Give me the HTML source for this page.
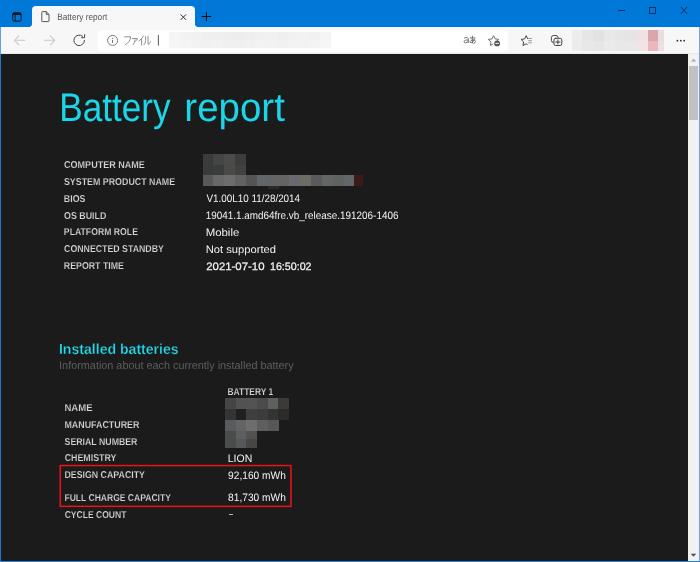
<!DOCTYPE html>
<html><head><meta charset="utf-8"><title>Battery report</title>
<style>
html,body{margin:0;padding:0}
body{width:700px;height:562px;overflow:hidden;position:relative;background:#1b1b1b;font-family:"Liberation Sans",sans-serif}
div{position:absolute}
.t{position:absolute;white-space:pre;line-height:1;transform-origin:0 0;text-rendering:geometricPrecision;font-family:"Liberation Sans",sans-serif}
#titlebar{left:0;top:0;width:700px;height:28px;background:#0078d7}
#tab{left:32px;top:6px;width:163px;height:22px;background:#f7f7f7;border-radius:4px 4px 0 0}
#tabcurveL{left:29px;top:24px;width:3px;height:3px;background:radial-gradient(circle at 0 0,#0078d7 2.6px,#f7f7f7 3.2px)}
#tabcurveR{left:195px;top:24px;width:3px;height:3px;background:radial-gradient(circle at 100% 0,#0078d7 2.6px,#f7f7f7 3.2px)}
#toolbar{left:0;top:27px;width:700px;height:27px;background:#f7f7f7}
#addr{left:98px;top:30px;width:409.5px;height:20.6px;background:#fff;border-radius:3.5px}
#content{left:1px;top:54px;width:687px;height:507px;background:#1b1b1b}
#sbtrack{left:688px;top:54px;width:11px;height:507px;background:#f1f1f1}
#sbthumb{left:689.4px;top:66px;width:8.4px;height:53.7px;background:#c1c1c1}
#tbline{left:1px;top:53px;width:698px;height:1px;background:#e9e9e9}
#bL{left:0;top:27px;width:1px;height:27px;background:#5f9fe4}
#bL2{left:0;top:54px;width:1px;height:508px;background:#1a78d6}
#bR{left:699px;top:27px;width:1px;height:535px;background:#6ea3e3}
#bB{left:0;top:561px;width:700px;height:1px;background:#1f7fd8}
.m{position:absolute}
#txtwrap{left:0;top:0;width:700px;height:562px;filter:blur(0.3px)}
</style></head><body>

<!-- window frame -->
<div id="titlebar"></div>
<div id="tab"></div>
<div id="tabcurveL"></div>
<div id="tabcurveR"></div>
<div id="toolbar"></div>
<div id="addr"></div>
<div id="content"></div>
<div id="sbtrack"></div>
<div id="sbthumb"></div>
<div id="tbline"></div><div id="bL"></div><div id="bL2"></div><div id="bR"></div><div id="bB"></div>

<!-- icons -->
<svg id="icons" width="700" height="562" viewBox="0 0 700 562" style="position:absolute;left:0;top:0" fill="none">
  <!-- tab actions icon -->
  <g stroke="#101010" stroke-width="1">
    <rect x="12.7" y="12.7" width="8.4" height="8.4" rx="1.6"/>
    <path d="M12.7 14 H21.1" stroke-width="1.8"/>
    <path d="M15.1 15 V21.1" stroke-width="0.9"/>
  </g>
  <!-- page icon -->
  <g stroke="#4f4f4f" stroke-width="0.95">
    <path d="M42.4 11.6 H46.2 L49 14.4 V21 Q49 21.6 48.4 21.6 H42.4 Q41.8 21.6 41.8 21 V12.2 Q41.8 11.6 42.4 11.6 Z"/>
    <path d="M46.2 11.8 V14.4 H48.8"/>
  </g>
  <!-- tab close -->
  <path d="M180.6 14.4 L186.1 19.9 M186.1 14.4 L180.6 19.9" stroke="#303030" stroke-width="1"/>
  <!-- new tab plus -->
  <path d="M201.6 16.5 H211.2 M206.4 11.8 V21.1" stroke="#0c0c14" stroke-width="1"/>
  <!-- back / forward -->
  <g stroke="#c9c9c9" stroke-width="1.1" stroke-linecap="round" stroke-linejoin="round">
    <path d="M25 40.3 H14.4 M18.9 35.8 L14.4 40.3 L18.9 44.8"/>
    <path d="M44.2 40.3 H54.8 M50.3 35.8 L54.8 40.3 L50.3 44.8"/>
  </g>
  <!-- reload -->
  <g stroke="#4a4a4a" stroke-width="1" stroke-linecap="round" stroke-linejoin="round">
    <path d="M84.5 40.3 A5.3 5.3 0 1 1 82.5 36.2"/>
    <path d="M84.6 34.6 V37.7 H81.5" />
  </g>
  <!-- info icon -->
  <circle cx="112.6" cy="40.4" r="5" stroke="#6c6c6c" stroke-width="0.9"/>
  <path d="M112.6 39.9 V43" stroke="#6c6c6c" stroke-width="1"/>
  <circle cx="112.6" cy="38.3" r="0.6" fill="#6c6c6c"/>
  <!-- separator -->
  <path d="M158.4 35 V45.6" stroke="#5a5a5a" stroke-width="1"/>
  <!-- window controls -->
  <g stroke="#082a4e" stroke-width="1">
    <path d="M618.2 10.5 H625"/>
    <rect x="649.5" y="7.5" width="6" height="6" stroke="#0a315c"/>
    <path d="M681 7.1 L687.1 13.7 M687.1 7.1 L681 13.7" stroke-width="0.95"/>
  </g>
  <!-- ... menu -->
  <g fill="#2b2b2b"><circle cx="677.4" cy="40.7" r="0.9"/><circle cx="680.8" cy="40.7" r="0.9"/><circle cx="684.2" cy="40.7" r="0.9"/></g>
  <!-- scrollbar arrows -->
  <path d="M690.9 61.5 L693.6 58.7 L696.3 61.5 Z" fill="#a9a9a9"/>
  <path d="M690.7 553.8 L693.5 556.8 L696.3 553.8 Z" fill="#505050"/>
</svg>

<div class="m" style="left:202.65px;top:153.95px;width:10.85px;height:10.75px;background:#3a3c3c"></div>
<div class="m" style="left:213.40px;top:153.95px;width:10.85px;height:10.75px;background:#444547"></div>
<div class="m" style="left:224.15px;top:153.95px;width:10.85px;height:10.75px;background:#4c4b49"></div>
<div class="m" style="left:234.90px;top:153.95px;width:10.85px;height:10.75px;background:#3c3e3e"></div>
<div class="m" style="left:202.65px;top:164.60px;width:10.85px;height:10.75px;background:#3a3a3a"></div>
<div class="m" style="left:213.40px;top:164.60px;width:10.85px;height:10.75px;background:#3a3c3c"></div>
<div class="m" style="left:224.15px;top:164.60px;width:10.85px;height:10.75px;background:#4a4a48"></div>
<div class="m" style="left:234.90px;top:164.60px;width:10.85px;height:10.75px;background:#424242"></div>
<div class="m" style="left:202.65px;top:175.25px;width:10.94px;height:10.80px;background:#56585a"></div>
<div class="m" style="left:213.48px;top:175.25px;width:10.94px;height:10.80px;background:#6a6866"></div>
<div class="m" style="left:224.32px;top:175.25px;width:10.94px;height:10.80px;background:#6c6e6c"></div>
<div class="m" style="left:235.15px;top:175.25px;width:10.94px;height:10.80px;background:#626262"></div>
<div class="m" style="left:245.99px;top:175.25px;width:10.94px;height:10.80px;background:#545454"></div>
<div class="m" style="left:256.82px;top:175.25px;width:10.94px;height:10.80px;background:#62666a"></div>
<div class="m" style="left:267.66px;top:175.25px;width:10.94px;height:10.80px;background:#646464"></div>
<div class="m" style="left:278.49px;top:175.25px;width:10.94px;height:10.80px;background:#646464"></div>
<div class="m" style="left:289.33px;top:175.25px;width:10.94px;height:10.80px;background:#686a70"></div>
<div class="m" style="left:300.17px;top:175.25px;width:10.94px;height:10.80px;background:#6c6c64"></div>
<div class="m" style="left:311.00px;top:175.25px;width:10.94px;height:10.80px;background:#585a5c"></div>
<div class="m" style="left:321.83px;top:175.25px;width:10.94px;height:10.80px;background:#646666"></div>
<div class="m" style="left:332.67px;top:175.25px;width:10.94px;height:10.80px;background:#606262"></div>
<div class="m" style="left:343.50px;top:175.25px;width:10.94px;height:10.80px;background:#626668"></div>
<div class="m" style="left:354.40px;top:175.30px;width:8.60px;height:10.70px;background:#3b1a18"></div>
<div class="m" style="left:268.00px;top:186.00px;width:10.60px;height:3.40px;background:#2a2a2a"></div>
<div class="m" style="left:225.15px;top:397.95px;width:10.75px;height:11.10px;background:#444646"></div>
<div class="m" style="left:235.80px;top:397.95px;width:10.75px;height:11.10px;background:#505254"></div>
<div class="m" style="left:246.45px;top:397.95px;width:10.75px;height:11.10px;background:#535352"></div>
<div class="m" style="left:257.10px;top:397.95px;width:10.75px;height:11.10px;background:#4b4b4a"></div>
<div class="m" style="left:267.75px;top:397.95px;width:10.75px;height:11.10px;background:#5e605f"></div>
<div class="m" style="left:278.40px;top:397.95px;width:10.75px;height:11.10px;background:#3b3a39"></div>
<div class="m" style="left:225.15px;top:408.95px;width:10.75px;height:11.10px;background:#343434"></div>
<div class="m" style="left:235.80px;top:408.95px;width:10.75px;height:11.10px;background:#202020"></div>
<div class="m" style="left:246.45px;top:408.95px;width:10.75px;height:11.10px;background:#3e4040"></div>
<div class="m" style="left:257.10px;top:408.95px;width:10.75px;height:11.10px;background:#3c3c3c"></div>
<div class="m" style="left:267.75px;top:408.95px;width:10.75px;height:11.10px;background:#343434"></div>
<div class="m" style="left:278.40px;top:408.95px;width:10.75px;height:11.10px;background:#2c2b2a"></div>
<div class="m" style="left:225.15px;top:419.95px;width:10.75px;height:11.10px;background:#5a5b5e"></div>
<div class="m" style="left:235.80px;top:419.95px;width:10.75px;height:11.10px;background:#646464"></div>
<div class="m" style="left:246.45px;top:419.95px;width:10.75px;height:11.10px;background:#6e6e6c"></div>
<div class="m" style="left:257.10px;top:419.95px;width:10.75px;height:11.10px;background:#5e5e5e"></div>
<div class="m" style="left:267.75px;top:419.95px;width:10.75px;height:11.10px;background:#575757"></div>
<div class="m" style="left:225.15px;top:430.95px;width:10.75px;height:8.45px;background:#4a4c4c"></div>
<div class="m" style="left:235.80px;top:430.95px;width:10.75px;height:8.45px;background:#5c5e60"></div>
<div class="m" style="left:246.45px;top:430.95px;width:10.75px;height:8.45px;background:#545250"></div>
<div class="m" style="left:225.15px;top:439.30px;width:10.75px;height:8.45px;background:#4c4c4c"></div>
<div class="m" style="left:235.80px;top:439.30px;width:10.75px;height:8.45px;background:#55575a"></div>
<div class="m" style="left:246.45px;top:439.30px;width:10.75px;height:8.45px;background:#474645"></div>
<div class="m" style="left:169.35px;top:32.25px;width:10.85px;height:8.10px;background:#f5f5f5"></div>
<div class="m" style="left:180.10px;top:32.25px;width:10.85px;height:8.10px;background:#f2f2f2"></div>
<div class="m" style="left:190.84px;top:32.25px;width:10.85px;height:8.10px;background:#f1f1f1"></div>
<div class="m" style="left:201.59px;top:32.25px;width:10.85px;height:8.10px;background:#efefef"></div>
<div class="m" style="left:212.34px;top:32.25px;width:10.85px;height:8.10px;background:#efefef"></div>
<div class="m" style="left:223.08px;top:32.25px;width:10.85px;height:8.10px;background:#eeeeee"></div>
<div class="m" style="left:233.83px;top:32.25px;width:10.85px;height:8.10px;background:#ededed"></div>
<div class="m" style="left:244.58px;top:32.25px;width:10.85px;height:8.10px;background:#eeeeee"></div>
<div class="m" style="left:255.32px;top:32.25px;width:10.85px;height:8.10px;background:#f0f0f0"></div>
<div class="m" style="left:266.07px;top:32.25px;width:10.85px;height:8.10px;background:#f1f1f1"></div>
<div class="m" style="left:276.82px;top:32.25px;width:10.85px;height:8.10px;background:#efefef"></div>
<div class="m" style="left:287.56px;top:32.25px;width:10.85px;height:8.10px;background:#f1f1f1"></div>
<div class="m" style="left:298.31px;top:32.25px;width:10.85px;height:8.10px;background:#f2f2f2"></div>
<div class="m" style="left:309.06px;top:32.25px;width:10.85px;height:8.10px;background:#f1f1f1"></div>
<div class="m" style="left:319.80px;top:32.25px;width:10.85px;height:8.10px;background:#f5f5f5"></div>
<div class="m" style="left:169.35px;top:40.25px;width:10.85px;height:8.10px;background:#f6f6f6"></div>
<div class="m" style="left:180.10px;top:40.25px;width:10.85px;height:8.10px;background:#f4f4f4"></div>
<div class="m" style="left:190.84px;top:40.25px;width:10.85px;height:8.10px;background:#f2f2f2"></div>
<div class="m" style="left:201.59px;top:40.25px;width:10.85px;height:8.10px;background:#f1f1f1"></div>
<div class="m" style="left:212.34px;top:40.25px;width:10.85px;height:8.10px;background:#f2f2f2"></div>
<div class="m" style="left:223.08px;top:40.25px;width:10.85px;height:8.10px;background:#f0f0f0"></div>
<div class="m" style="left:233.83px;top:40.25px;width:10.85px;height:8.10px;background:#f0f0f0"></div>
<div class="m" style="left:244.58px;top:40.25px;width:10.85px;height:8.10px;background:#f1f1f1"></div>
<div class="m" style="left:255.32px;top:40.25px;width:10.85px;height:8.10px;background:#f3f3f3"></div>
<div class="m" style="left:266.07px;top:40.25px;width:10.85px;height:8.10px;background:#f2f2f2"></div>
<div class="m" style="left:276.82px;top:40.25px;width:10.85px;height:8.10px;background:#f1f1f1"></div>
<div class="m" style="left:287.56px;top:40.25px;width:10.85px;height:8.10px;background:#f3f3f3"></div>
<div class="m" style="left:298.31px;top:40.25px;width:10.85px;height:8.10px;background:#f3f3f3"></div>
<div class="m" style="left:309.06px;top:40.25px;width:10.85px;height:8.10px;background:#f4f4f4"></div>
<div class="m" style="left:319.80px;top:40.25px;width:10.85px;height:8.10px;background:#f6f6f6"></div>
<div class="m" style="left:572.00px;top:30.00px;width:10.10px;height:10.60px;background:#ededed"></div>
<div class="m" style="left:572.00px;top:40.50px;width:10.10px;height:10.50px;background:#ececec"></div>
<div class="m" style="left:582.00px;top:30.00px;width:11.10px;height:10.60px;background:#e6e6e6"></div>
<div class="m" style="left:582.00px;top:40.50px;width:11.10px;height:10.50px;background:#e8e8e8"></div>
<div class="m" style="left:593.00px;top:30.00px;width:11.10px;height:10.60px;background:#e2e2e2"></div>
<div class="m" style="left:593.00px;top:40.50px;width:11.10px;height:10.50px;background:#e6e6e6"></div>
<div class="m" style="left:604.00px;top:30.00px;width:11.10px;height:10.60px;background:#e8e8e8"></div>
<div class="m" style="left:604.00px;top:40.50px;width:11.10px;height:10.50px;background:#eaeaea"></div>
<div class="m" style="left:615.00px;top:30.00px;width:11.10px;height:10.60px;background:#e6e6e6"></div>
<div class="m" style="left:615.00px;top:40.50px;width:11.10px;height:10.50px;background:#e8e8e8"></div>
<div class="m" style="left:626.00px;top:30.00px;width:11.10px;height:10.60px;background:#e5e5e5"></div>
<div class="m" style="left:626.00px;top:40.50px;width:11.10px;height:10.50px;background:#e8e8e8"></div>
<div class="m" style="left:637.00px;top:30.00px;width:10.60px;height:10.60px;background:#f1e1e4"></div>
<div class="m" style="left:637.00px;top:40.50px;width:10.60px;height:10.50px;background:#f3e3e6"></div>
<div class="m" style="left:647.50px;top:30.00px;width:10.60px;height:10.60px;background:#d9a6ae"></div>
<div class="m" style="left:647.50px;top:40.50px;width:10.60px;height:10.50px;background:#edb6be"></div>
<div class="m" style="left:658.00px;top:30.00px;width:6.10px;height:10.60px;background:#eadcdf"></div>
<div class="m" style="left:658.00px;top:40.50px;width:6.10px;height:10.50px;background:#eee0e2"></div>

<svg width="700" height="562" viewBox="0 0 700 562" style="position:absolute;left:0;top:0" fill="none">
  <rect x="60.25" y="465.55" width="230.7" height="40.8" stroke="#ee1219" stroke-width="1.5"/>
  <!-- kana label -->
  <g stroke="#858585" stroke-width="0.9" stroke-linecap="round" stroke-linejoin="round">
    
    <path d="M124.6 36.8 H130.6 Q130.4 42.2 125.4 44.6"/>
    
    <path d="M132.4 38.6 H137.6 Q137 40.2 135.6 41.2 M135 39.8 Q135.2 43 133 44.8"/>
    
    <path d="M143.6 36 Q141.6 39.4 138.8 41 M141.6 39.2 V45"/>
    
    <path d="M145.6 36.6 V40.4 Q145.6 43.4 144 44.8 M148 36.2 V44.4 Q149.6 43.8 150.6 41.8"/>
  </g>
  <!-- translate icon -->
  <g stroke="#5e5e5e" stroke-width="0.85" stroke-linecap="round" stroke-linejoin="round">
    <path d="M464.5 37.9 Q466 37.2 467.4 37.7 Q468.3 38.2 468.3 39.4 V42.6 M468.3 40 Q464.1 39.8 464.1 41.6 Q464.1 42.8 465.6 42.8 Q467.3 42.8 468.3 41.4"/>
    <path d="M470.2 37.9 H475 M472.4 36.2 Q472 40.2 472.6 43 M474.6 39 Q473.9 41.9 471.2 42.7 Q469.9 42.7 470.1 41.6 Q470.5 40.1 472.9 39.9 Q475.4 39.9 475.6 41.4 Q475.6 42.7 473.9 43.3"/>
  </g>
  <!-- star with minus badge -->
  <g stroke="#666" stroke-width="0.95" stroke-linejoin="round">
    <path d="M493.6 35.6 L495.2 38.9 L498.8 39.4 L496.6 41.5 M491 41.9 L488.4 39.4 L492 38.9 L493.6 35.6 M491 41.9 L490.4 45.5 L493.2 44"/>
  </g>
  <circle cx="497.1" cy="43.4" r="2.9" fill="#555"/>
  <path d="M495.4 43.4 H498.8" stroke="#f4f4f4" stroke-width="1.1"/>
  <!-- favorites star with lines -->
  <g stroke="#3c3c3c" stroke-width="0.95" stroke-linejoin="round" stroke-linecap="round">
    <path d="M527.6 38.6 L526.2 35.7 L524.6 38.9 L521 39.4 L523.6 41.9 L523 45.5 L526.2 43.8 L527.2 44.3"/>
  </g>
  <g stroke="#8c8c8c" stroke-width="0.9">
    <path d="M528.2 38.5 H531.9 M528.2 40.7 H531.9 M528.2 42.8 H531.9"/>
  </g>
  <!-- collections -->
  <g stroke="#3c3c3c" stroke-width="0.95" stroke-linejoin="round" stroke-linecap="round">
    <path d="M553.2 42.5 Q551.4 42.5 551.4 40.4 V37.6 Q551.4 35.5 553.6 35.5 H556 Q558.1 35.5 558.1 37.4"/>
    <rect x="554" y="38.3" width="7.8" height="7.2" rx="1.6"/>
    <path d="M557.9 39.9 V44 M555.8 42 H560"/>
  </g>
</svg>

<div id="txtwrap"><span class="t" style="left:57px;top:13px;font-size:9.2px;font-weight:400;color:#555555;transform:translateX(0.22px) scaleX(0.8990);">Battery report</span>
<span class="t" style="left:59px;top:88px;font-size:40px;font-weight:400;color:#1ad6e8;transform:translateX(0.21px) scaleX(0.8788);">Battery</span>
<span class="t" style="left:184px;top:88px;font-size:40px;font-weight:400;color:#1ad6e8;transform:translateX(0.37px) scaleX(0.9613);">report</span>
<span class="t" style="left:64px;top:161px;font-size:10px;font-weight:700;color:#d4d4d4;transform:translateX(0.03px) scaleX(0.9035);-webkit-text-stroke:0.15px #1b1b1b;">COMPUTER NAME</span>
<span class="t" style="left:63px;top:178px;font-size:10px;font-weight:700;color:#d4d4d4;transform:translateX(0.96px) scaleX(0.8852);-webkit-text-stroke:0.15px #1b1b1b;">SYSTEM PRODUCT NAME</span>
<span class="t" style="left:63px;top:195px;font-size:10px;font-weight:700;color:#d4d4d4;transform:translateX(0.84px) scaleX(0.8843);-webkit-text-stroke:0.15px #1b1b1b;">BIOS</span>
<span class="t" style="left:64px;top:212px;font-size:10px;font-weight:700;color:#d4d4d4;transform:translateX(0.04px) scaleX(0.8846);-webkit-text-stroke:0.15px #1b1b1b;">OS BUILD</span>
<span class="t" style="left:63px;top:228px;font-size:10px;font-weight:700;color:#d4d4d4;transform:translateX(0.85px) scaleX(0.8681);-webkit-text-stroke:0.15px #1b1b1b;">PLATFORM ROLE</span>
<span class="t" style="left:64px;top:245px;font-size:10px;font-weight:700;color:#d4d4d4;transform:translateX(0.04px) scaleX(0.8782);-webkit-text-stroke:0.15px #1b1b1b;">CONNECTED STANDBY</span>
<span class="t" style="left:63px;top:262px;font-size:10px;font-weight:700;color:#d4d4d4;transform:translateX(0.84px) scaleX(0.8793);-webkit-text-stroke:0.15px #1b1b1b;">REPORT TIME</span>
<span class="t" style="left:206px;top:194px;font-size:10.8px;font-weight:400;color:#f2f2f2;transform:translateX(0.39px) scaleX(0.9145);">V1.00L10 11/28/2014</span>
<span class="t" style="left:205px;top:211px;font-size:10.8px;font-weight:400;color:#f2f2f2;transform:translateX(0.68px) scaleX(0.9175);">19041.1.amd64fre.vb_release.191206-1406</span>
<span class="t" style="left:205px;top:228px;font-size:10.8px;font-weight:400;color:#f2f2f2;transform:translateX(0.66px) scaleX(1.0570);">Mobile</span>
<span class="t" style="left:205px;top:245px;font-size:10.8px;font-weight:400;color:#f2f2f2;transform:translateX(0.69px) scaleX(1.0358);">Not supported</span>
<span class="t" style="left:206px;top:262px;font-size:10.8px;font-weight:400;color:#f2f2f2;transform:translateX(0.24px) scaleX(1.0549);-webkit-text-stroke:0.25px #f2f2f2;">2021-07-10</span>
<span class="t" style="left:269px;top:262px;font-size:10.8px;font-weight:400;color:#f2f2f2;transform:translateX(0.99px) scaleX(0.9886);-webkit-text-stroke:0.25px #f2f2f2;">16:50:02</span>
<span class="t" style="left:58px;top:343px;font-size:14.6px;font-weight:700;color:#1fe0f0;transform:translateX(0.96px) scaleX(0.9647);-webkit-text-stroke:0.3px #1b1b1b;">Installed batteries</span>
<span class="t" style="left:59px;top:361px;font-size:11px;font-weight:400;color:#5e5e5e;transform:translateX(0.11px) scaleX(0.9859);">Information about each currently installed battery</span>
<span class="t" style="left:227px;top:388px;font-size:10px;font-weight:700;color:#d4d4d4;transform:translateX(0.47px) scaleX(0.8420);-webkit-text-stroke:0.15px #1b1b1b;">BATTERY 1</span>
<span class="t" style="left:64px;top:404px;font-size:10px;font-weight:700;color:#d4d4d4;transform:translateX(0.40px) scaleX(0.9567);-webkit-text-stroke:0.15px #1b1b1b;">NAME</span>
<span class="t" style="left:64px;top:421px;font-size:10px;font-weight:700;color:#d4d4d4;transform:translateX(0.44px) scaleX(0.8885);-webkit-text-stroke:0.15px #1b1b1b;">MANUFACTURER</span>
<span class="t" style="left:64px;top:438px;font-size:10px;font-weight:700;color:#d4d4d4;transform:translateX(0.56px) scaleX(0.8763);-webkit-text-stroke:0.15px #1b1b1b;">SERIAL NUMBER</span>
<span class="t" style="left:64px;top:454px;font-size:10px;font-weight:700;color:#d4d4d4;transform:translateX(0.64px) scaleX(0.8843);-webkit-text-stroke:0.15px #1b1b1b;">CHEMISTRY</span>
<span class="t" style="left:64px;top:471px;font-size:10px;font-weight:700;color:#d4d4d4;transform:translateX(0.44px) scaleX(0.8800);-webkit-text-stroke:0.15px #1b1b1b;">DESIGN CAPACITY</span>
<span class="t" style="left:64px;top:494px;font-size:10px;font-weight:700;color:#d4d4d4;transform:translateX(0.46px) scaleX(0.8534);-webkit-text-stroke:0.15px #1b1b1b;">FULL CHARGE CAPACITY</span>
<span class="t" style="left:64px;top:511px;font-size:10px;font-weight:700;color:#d4d4d4;transform:translateX(0.65px) scaleX(0.8551);-webkit-text-stroke:0.15px #1b1b1b;">CYCLE COUNT</span>
<span class="t" style="left:227px;top:454px;font-size:10.8px;font-weight:400;color:#f2f2f2;transform:translateX(0.73px) scaleX(0.9711);">LION</span>
<span class="t" style="left:228px;top:471px;font-size:10.8px;font-weight:400;color:#f2f2f2;transform:translateX(0.09px) scaleX(0.9433);">92,160 mWh</span>
<span class="t" style="left:228px;top:493px;font-size:10.8px;font-weight:400;color:#f2f2f2;transform:translateX(0.12px) scaleX(0.9428);">81,730 mWh</span>
<div style="left:229px;top:514.1px;width:3.6px;height:1px;background:#b4b4b4"></div></div>

</body></html>
